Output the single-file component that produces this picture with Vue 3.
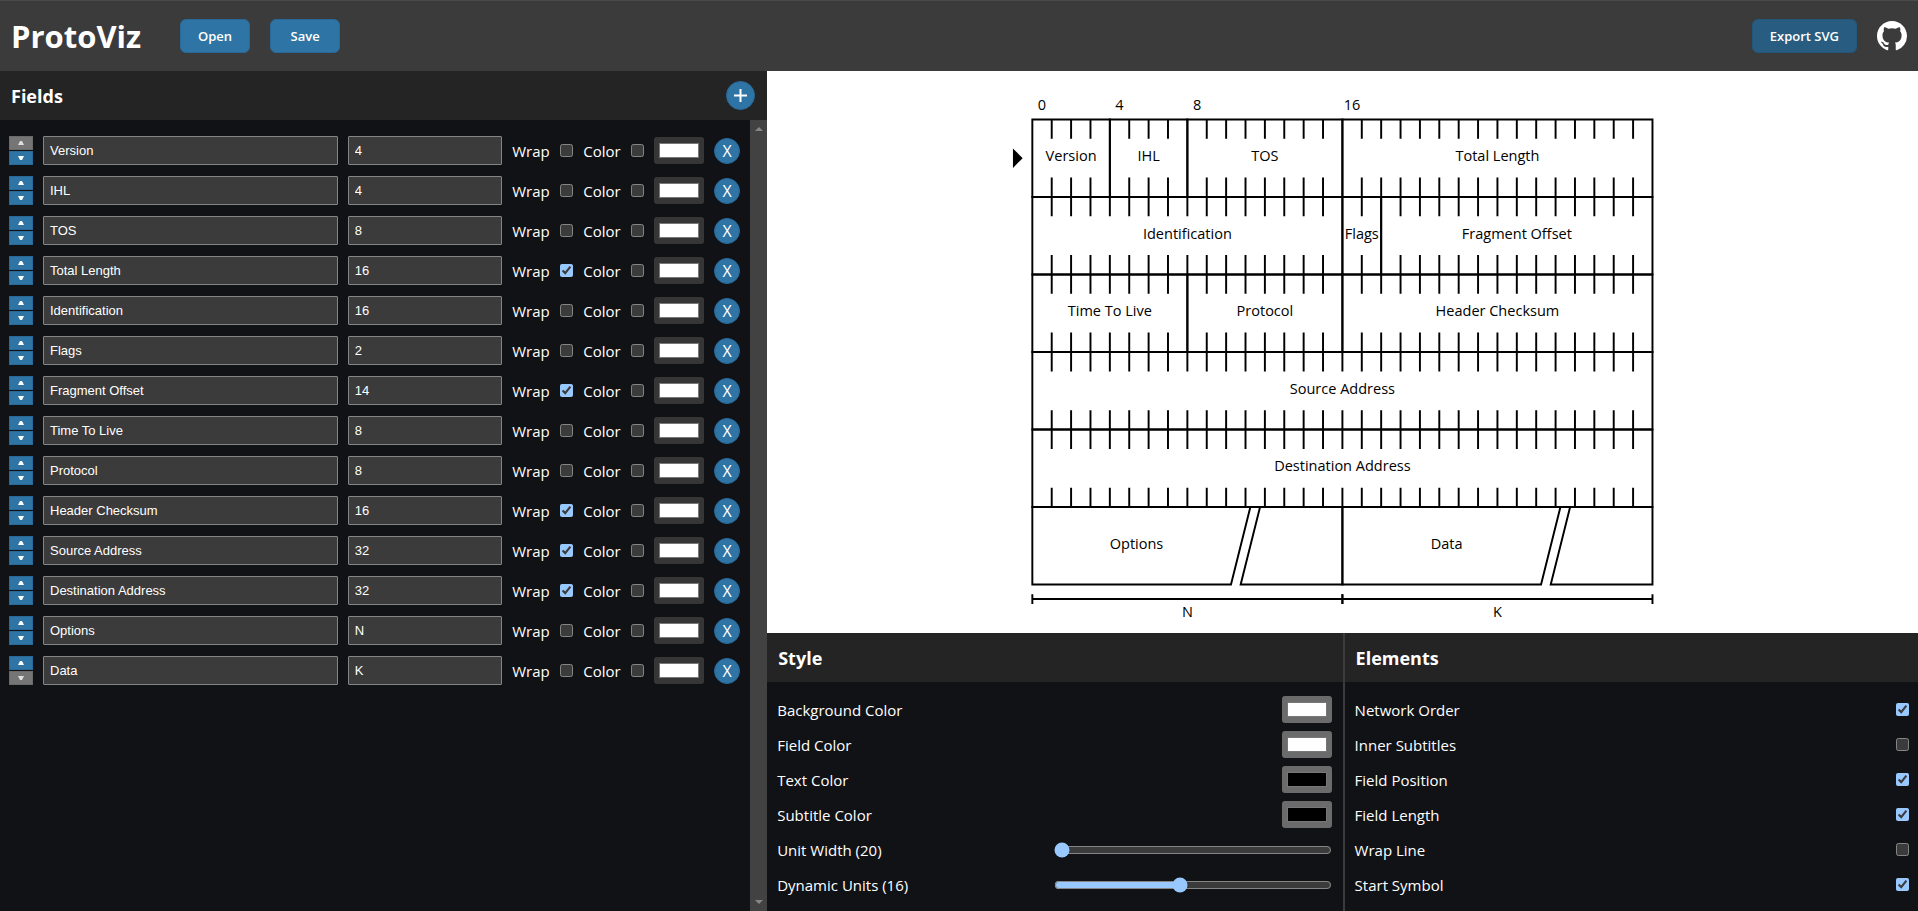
<script setup>
import { ref, computed } from 'vue'

const fields = ref([
  { name: 'Version', length: '4', wrap: false },
  { name: 'IHL', length: '4', wrap: false },
  { name: 'TOS', length: '8', wrap: false },
  { name: 'Total Length', length: '16', wrap: true },
  { name: 'Identification', length: '16', wrap: false },
  { name: 'Flags', length: '2', wrap: false },
  { name: 'Fragment Offset', length: '14', wrap: true },
  { name: 'Time To Live', length: '8', wrap: false },
  { name: 'Protocol', length: '8', wrap: false },
  { name: 'Header Checksum', length: '16', wrap: true },
  { name: 'Source Address', length: '32', wrap: true },
  { name: 'Destination Address', length: '32', wrap: true },
  { name: 'Options', length: 'N', wrap: false },
  { name: 'Data', length: 'K', wrap: false }
].map((f) => ({ ...f, colored: false, color: '#ffffff' })))

const colors = ref([
  { id: 'background', label: 'Background Color', value: '#ffffff' },
  { id: 'field', label: 'Field Color', value: '#ffffff' },
  { id: 'text', label: 'Text Color', value: '#000000' },
  { id: 'subtitle', label: 'Subtitle Color', value: '#000000' }
])
const unitWidth = ref(20)
const dynamicUnits = ref(16)

const elements = ref([
  { id: 'order', label: 'Network Order', on: true },
  { id: 'inner', label: 'Inner Subtitles', on: false },
  { id: 'position', label: 'Field Position', on: true },
  { id: 'length', label: 'Field Length', on: true },
  { id: 'wrapline', label: 'Wrap Line', on: false },
  { id: 'start', label: 'Start Symbol', on: true }
])

const MARGIN = 50
const ROW = 80
const TICK = 20

const cells = computed(() => {
  let column = 0
  let row = 0
  return fields.value.map((f) => {
    const dynamic = !/^\d+$/.test(f.length)
    const units = dynamic ? dynamicUnits.value : Number(f.length)
    const w = units * unitWidth.value
    const x = MARGIN + column * unitWidth.value
    const y = MARGIN + row * ROW
    const cell = { name: f.name, length: f.length, dynamic, units, column, row, x, y, w }
    column += units
    if (f.wrap) {
      column = 0
      row += 1
    }
    return cell
  })
})

function outline(c) {
  const right = c.x + c.w
  const bottom = c.y + ROW
  if (!c.dynamic) return `M${c.x} ${c.y}H${right}V${bottom}H${c.x}Z`
  const cut = c.x + c.w - 95
  return `M${cut} ${c.y}H${c.x}V${bottom}H${cut - 20}ZM${cut + 10} ${c.y}H${right}V${bottom}H${cut - 10}ZM${cut} ${c.y}H${cut + 10}`
}

function ticks(c) {
  if (c.dynamic) return ''
  let d = ''
  for (let i = 1; i < c.units; i++) {
    const x = c.x + i * unitWidth.value
    d += `M${x} ${c.y}v${TICK}M${x} ${c.y + ROW}v${-TICK}`
  }
  return d
}

function measure(c) {
  const y = c.y + ROW + 15
  return `M${c.x} ${y}h${c.w}M${c.x} ${y - 5}v10M${c.x + c.w} ${y - 5}v10`
}

const labelX = (c) => (c.dynamic ? c.x + (c.w - 105) / 2 : c.x + c.w / 2)
</script>

<template>
  <div class="app">
    <header class="topbar">
      <h1>ProtoViz</h1>
      <button class="action" type="button">Open</button>
      <button class="action" type="button">Save</button>
      <button class="action active" type="button">Export SVG</button>
      <a class="github" href="#" aria-label="GitHub">
        <svg viewBox="0 0 16 16" width="30" height="30" fill="#fff">
          <path d="M8 0C3.58 0 0 3.58 0 8c0 3.54 2.29 6.53 5.47 7.59.4.07.55-.17.55-.38 0-.19-.01-.82-.01-1.49-2.01.37-2.53-.49-2.69-.94-.09-.23-.48-.94-.82-1.13-.28-.15-.68-.52-.01-.53.63-.01 1.08.58 1.23.82.72 1.21 1.87.87 2.33.66.07-.52.28-.87.51-1.07-1.78-.2-3.64-.89-3.64-3.95 0-.87.31-1.59.82-2.15-.08-.2-.36-1.02.08-2.12 0 0 .67-.21 2.2.82.64-.18 1.32-.27 2-.27s1.36.09 2 .27c1.53-1.04 2.2-.82 2.2-.82.44 1.1.16 1.92.08 2.12.51.56.82 1.27.82 2.15 0 3.07-1.87 3.75-3.65 3.95.29.25.54.73.54 1.48 0 1.07-.01 1.93-.01 2.2 0 .21.15.46.55.38A8.01 8.01 0 0 0 16 8c0-4.42-3.58-8-8-8z" />
        </svg>
      </a>
    </header>

    <main class="workspace">
      <section class="fields">
        <div class="heading">
          <h2>Fields</h2>
          <button class="round add" type="button" aria-label="Add field">
            <svg viewBox="0 0 13 13" width="13" height="13"><path d="M6.5 0v13M0 6.5h13" stroke="#fff" stroke-width="2" /></svg>
          </button>
        </div>
        <div class="list-area">
          <ul class="list">
            <li v-for="(f, i) in fields" :key="i" class="row">
              <div class="movers">
                <button type="button" aria-label="Move up" :disabled="i === 0">
                  <svg viewBox="0 0 6 4" width="6" height="4"><path d="M0 4 2 0H4L6 4Z" fill="currentColor" /></svg>
                </button>
                <button type="button" aria-label="Move down" :disabled="i === fields.length - 1">
                  <svg viewBox="0 0 6 4" width="6" height="4"><path d="M0 0 2 4H4L6 0Z" fill="currentColor" /></svg>
                </button>
              </div>
              <input v-model="f.name" class="text name" type="text" aria-label="Field name" />
              <input v-model="f.length" class="text length" type="text" aria-label="Field length" />
              <label :for="'wrap' + i">Wrap</label>
              <input :id="'wrap' + i" v-model="f.wrap" type="checkbox" />
              <label :for="'color' + i">Color</label>
              <input :id="'color' + i" v-model="f.colored" type="checkbox" />
              <input v-model="f.color" type="color" aria-label="Field color" :disabled="!f.colored" />
              <button class="round" type="button" aria-label="Remove field">X</button>
            </li>
          </ul>
          <div class="scrollbar" aria-hidden="true">
            <svg viewBox="0 0 8 4" width="8" height="4"><path d="M0 4 4 0 8 4Z" fill="#868686" /></svg>
            <svg viewBox="0 0 8 4" width="8" height="4"><path d="M0 0 4 4 8 0Z" fill="#868686" /></svg>
          </div>
        </div>
      </section>

      <section class="right">
        <div class="canvas">
          <svg class="diagram" viewBox="0 0 740 580" role="img" aria-label="Protocol diagram">
            <path d="M30 80 40 90 30 100Z" />
            <g v-for="(c, i) in cells" :key="i">
              <path class="line" :d="outline(c)" />
              <path class="line" :d="ticks(c)" />
              <text :x="labelX(c)" :y="c.y + 43">{{ c.name }}</text>
              <text v-if="c.row === 0" :x="c.x + unitWidth / 2" y="40">{{ c.column }}</text>
              <template v-if="c.dynamic">
                <path class="line" :d="measure(c)" />
                <text :x="c.x + c.w / 2" :y="c.y + ROW + 33">{{ c.length }}</text>
              </template>
            </g>
          </svg>
        </div>

        <div class="panels">
          <section class="panel">
            <div class="heading"><h2>Style</h2></div>
            <div class="options">
              <div v-for="c in colors" :key="c.id" class="option">
                <label :for="c.id">{{ c.label }}</label>
                <input :id="c.id" v-model="c.value" type="color" />
              </div>
              <div class="option">
                <label for="unit-width">Unit Width ({{ unitWidth }})</label>
                <input id="unit-width" v-model.number="unitWidth" type="range" min="20" max="100" />
              </div>
              <div class="option">
                <label for="dynamic-units">Dynamic Units ({{ dynamicUnits }})</label>
                <input id="dynamic-units" v-model.number="dynamicUnits" type="range" min="2" max="33" />
              </div>
            </div>
          </section>
          <section class="panel">
            <div class="heading"><h2>Elements</h2></div>
            <div class="options">
              <div v-for="e in elements" :key="e.id" class="option">
                <label :for="'el-' + e.id">{{ e.label }}</label>
                <input :id="'el-' + e.id" v-model="e.on" type="checkbox" />
              </div>
            </div>
          </section>
        </div>
      </section>
    </main>
  </div>
</template>

<style>
html {
  color-scheme: dark;
}
body {
  margin: 0;
  background: #111216;
}
</style>

<style scoped>
.app {
  display: flex;
  flex-direction: column;
  height: 100vh;
  box-sizing: border-box;
  color: #fff;
  font-family: "Segoe UI", "Open Sans", "Noto Sans", sans-serif;
  font-size: 15px;
  line-height: 20px;
}
h1,
h2,
ul {
  margin: 0;
  padding: 0;
}
svg {
  display: block;
}
.topbar {
  flex: none;
  display: flex;
  align-items: center;
  gap: 20px;
  height: 71px;
  box-sizing: border-box;
  padding: 0 11px;
  border-top: 1px solid #4a4a4a;
  background: #3b3b3b;
}
h1 {
  width: 149px;
  font-size: 31px;
  line-height: 40px;
}
.action {
  min-width: 70px;
  height: 34px;
  padding: 0 17px;
  border: 1px solid #28699a;
  border-radius: 6px;
  background: #2e74a4;
  color: #fff;
  font: 600 13px/20px "Segoe UI", "Open Sans", "Noto Sans", sans-serif;
}
.action.active {
  margin-left: auto;
  border-color: #24587b;
  background: #285c80;
}
.workspace {
  flex: 1;
  min-height: 0;
  display: grid;
  grid-template-columns: 2fr 3fr;
}
.fields {
  display: flex;
  flex-direction: column;
  min-width: 0;
  min-height: 0;
}
.heading {
  flex: none;
  display: flex;
  align-items: center;
  justify-content: space-between;
  height: 49px;
  padding: 0 12px 0 11px;
  background: #242424;
}
h2 {
  font-size: 18px;
  line-height: 24px;
}
.round {
  flex: none;
  display: flex;
  align-items: center;
  justify-content: center;
  width: 26px;
  height: 26px;
  padding: 0;
  border: 1px solid #28699a;
  border-radius: 50%;
  background: #2e74a4;
  color: #fff;
  font: 16px/20px "Segoe UI", "Open Sans", "Noto Sans", sans-serif;
}
.round.add {
  width: 29px;
  height: 29px;
}
.list-area {
  flex: 1;
  min-height: 0;
  display: flex;
}
.list {
  flex: 1;
  min-width: 0;
  display: flex;
  flex-direction: column;
  gap: 11px;
  padding: 16px 10px 0 9px;
  overflow: hidden;
  list-style: none;
}
.row {
  flex: none;
  display: flex;
  align-items: center;
  gap: 10px;
  height: 29px;
}
.movers {
  display: flex;
  flex-direction: column;
  gap: 1px;
}
.movers button {
  display: flex;
  align-items: center;
  justify-content: center;
  width: 24px;
  height: 14px;
  padding: 0;
  border: 1px solid #28699a;
  background: #2e74a4;
  color: #fff;
}
.movers button:disabled {
  border-color: #6a6a6a;
  background: #757575;
  color: #ddd;
}
.text {
  min-width: 0;
  height: 29px;
  box-sizing: border-box;
  padding: 0 6px;
  border: 1px solid #858585;
  border-radius: 1px;
  background: #3b3b3b;
  color: #fff;
  font: 13px/20px "Liberation Sans", Arial, sans-serif;
}
.name {
  flex: 2;
}
.length {
  flex: 1;
}
.row label {
  min-width: 38px;
}
input[type="checkbox"] {
  flex: none;
  width: 13px;
  height: 13px;
  margin: 0;
}
input[type="color"] {
  flex: none;
  width: 50px;
  height: 27px;
  box-sizing: border-box;
}
input[type="color"]::-webkit-color-swatch {
  border: 1px solid #777;
  border-radius: 0;
}
.scrollbar {
  flex: none;
  display: flex;
  flex-direction: column;
  align-items: center;
  justify-content: space-between;
  width: 17px;
  padding: 7px 0;
  box-sizing: border-box;
  background: #424242;
}
.right {
  display: flex;
  flex-direction: column;
  min-width: 0;
  min-height: 0;
}
.canvas {
  flex: 1;
  min-height: 0;
  background: #fff;
}
.diagram {
  width: 100%;
  height: 100%;
}
.diagram text {
  fill: #000;
  font-size: 15px;
  text-anchor: middle;
}
.line {
  fill: none;
  stroke: #000;
  stroke-width: 2;
}
.panels {
  flex: none;
  display: grid;
  grid-template-columns: 1fr 1fr;
}
.panel + .panel {
  border-left: 2px solid #3b3b3b;
}
.options {
  padding: 10px 9px 9px 10px;
}
.panel:first-child .options {
  padding-right: 11px;
}
.option {
  display: flex;
  align-items: center;
  justify-content: space-between;
  height: 35px;
}
input[type="range"] {
  width: 50%;
  margin: 0;
}
</style>
